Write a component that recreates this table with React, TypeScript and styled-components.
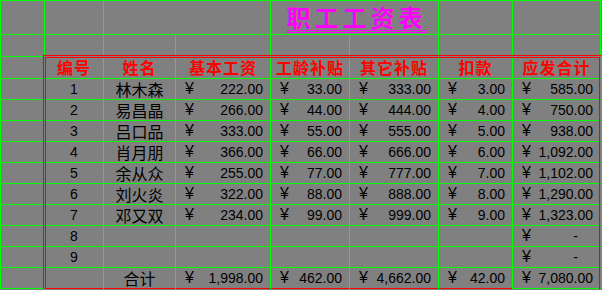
import React from "react";
import styled, { createGlobalStyle } from "styled-components";

const GlobalStyle = createGlobalStyle`
  html, body {
    margin: 0;
    padding: 0;
    background: #808080;
    overflow: hidden;
  }
`;

const Sheet = styled.div`
  position: relative;
  overflow: hidden;
  width: max-content;
  padding: 1px;

  display: grid;
  grid-template-columns: 43px 58px 71px 94px 78px 88px 73px 87px;
  grid-template-rows: 33px 21px 21px repeat(10, 20px);
  gap: 1px;

  background: #00ff00;
  color: #000;
  font-family: "Liberation Sans", "Noto Sans CJK SC", sans-serif;
  font-size: 14px;
  line-height: 16px;
`;

const Row = styled.div`
  display: contents;
`;

type Align = "left" | "center" | "right";

const Cell = styled.div<{ $span?: number; $align?: Align; $closing?: boolean }>`
  grid-column: span ${(p) => p.$span ?? 1};
  background: #808080;
  white-space: nowrap;

  display: flex;
  align-items: center;
  justify-content: ${(p) =>
    p.$align === "left" ? "flex-start" : p.$align === "right" ? "flex-end" : "center"};

  box-shadow: ${(p) => (p.$closing ? "0 1px 0 #ff0000" : "none")};
`;

const TitleCell = styled(Cell)`
  align-items: flex-end;
  padding-bottom: 1px;
`;

const Title = styled.span`
  font-family: "Noto Sans CJK SC", sans-serif;
  font-size: 24px;
  font-weight: 700;
  line-height: 26px;
  letter-spacing: 4px;
  color: #ff00ff;
  border-bottom: 3px double #ff00ff;
  margin-left: 4px;
`;

const HeadCell = styled(Cell)`
  font-family: "Noto Sans CJK SC", sans-serif;
  font-size: 16px;
  font-weight: 700;
  line-height: 17px;
  letter-spacing: 1px;
  color: #ff0000;
`;

const NameCell = styled(Cell)`
  font-family: "Noto Sans CJK SC", sans-serif;
  font-size: 16px;
  line-height: 16px;
`;

const MoneyCell = styled(Cell)`
  justify-content: space-between;
  padding: 0 7px 0 9px;
`;

const Yen = styled.span`
  font-size: 16px;
`;

const Dash = styled.span`
  padding-right: 15px;
`;

const Frame = styled.div`
  position: absolute;
  left: 43px;
  top: 55px;
  width: 559px;
  height: 260px;
  box-sizing: border-box;
  border: 1px solid #ff0000;
  box-shadow: inset 0 0 0 1px #808080, inset 0 0 0 2px #ff0000;
  pointer-events: none;
`;

type Entry = {
  no: string;
  name: string;
  base?: string;
  seniority?: string;
  other?: string;
  deduction?: string;
  total?: string;
};

const entries: Entry[] = [
  { no: "1", name: "林木森", base: "222.00", seniority: "33.00", other: "333.00", deduction: "3.00", total: "585.00" },
  { no: "2", name: "易昌晶", base: "266.00", seniority: "44.00", other: "444.00", deduction: "4.00", total: "750.00" },
  { no: "3", name: "吕口品", base: "333.00", seniority: "55.00", other: "555.00", deduction: "5.00", total: "938.00" },
  { no: "4", name: "肖月朋", base: "366.00", seniority: "66.00", other: "666.00", deduction: "6.00", total: "1,092.00" },
  { no: "5", name: "余从众", base: "255.00", seniority: "77.00", other: "777.00", deduction: "7.00", total: "1,102.00" },
  { no: "6", name: "刘火炎", base: "322.00", seniority: "88.00", other: "888.00", deduction: "8.00", total: "1,290.00" },
  { no: "7", name: "邓又双", base: "234.00", seniority: "99.00", other: "999.00", deduction: "9.00", total: "1,323.00" },
  { no: "8", name: "" },
  { no: "9", name: "" },
];

const headers = ["编号", "姓名", "基本工资", "工龄补贴", "其它补贴", "扣款", "应发合计"];

const Money: React.FC<{ value?: string; dash?: boolean; closing?: boolean }> = ({ value, dash, closing }) => {
  if (!value && !dash) return <Cell $closing={closing} />;
  return (
    <MoneyCell $closing={closing}>
      <Yen>¥</Yen>
      {value ? <span>{value}</span> : <Dash>-</Dash>}
    </MoneyCell>
  );
};

const App: React.FC = () => {
  return (
    <>
      <GlobalStyle />
      <Sheet>
        <Row>
          <Cell />
          <Cell />
          <Cell $span={2} />
          <TitleCell $span={2}>
            <Title>职工工资表</Title>
          </TitleCell>
          <Cell />
          <Cell />
        </Row>

        <Row>
          {Array.from({ length: 8 }).map((_, i) => (
            <Cell key={i} />
          ))}
        </Row>

        <Row>
          <Cell />
          {headers.map((h) => (
            <HeadCell key={h}>{h}</HeadCell>
          ))}
        </Row>

        {entries.map((e) => (
          <Row key={e.no}>
            <Cell />
            <Cell>{e.no}</Cell>
            <NameCell>{e.name}</NameCell>
            <Money value={e.base} />
            <Money value={e.seniority} />
            <Money value={e.other} />
            <Money value={e.deduction} />
            <Money value={e.total} dash />
          </Row>
        ))}

        <Row>
          <Cell />
          <Cell $closing />
          <NameCell $closing>合计</NameCell>
          <Money value="1,998.00" closing />
          <Money value="462.00" closing />
          <Money value="4,662.00" closing />
          <Money value="42.00" closing />
          <Money value="7,080.00" />
        </Row>

        <Frame />
      </Sheet>
    </>
  );
};

export default App;
